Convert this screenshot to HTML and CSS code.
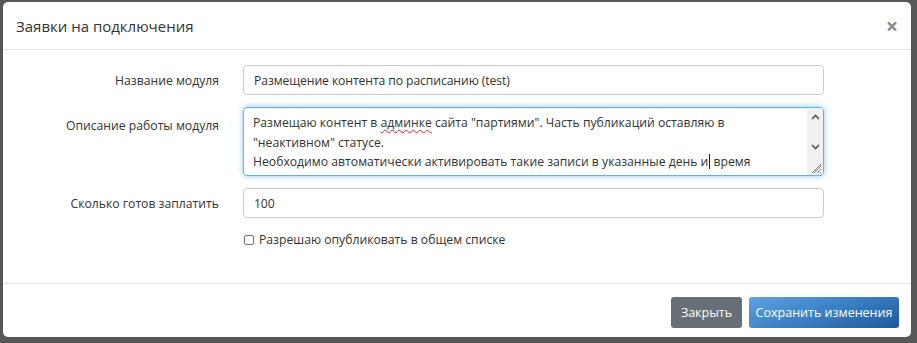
FILE: index.html
```html
<!DOCTYPE html>
<html lang="ru">
<head>
<meta charset="utf-8">
<title>Заявки на подключения</title>
<link rel="stylesheet" href="styles.css">
</head>
<body>
<div class="modal">
  <div class="modal-header">
    <h4 class="modal-title">Заявки на подключения</h4>
    <span class="close">×</span>
  </div>
  <div class="modal-body">
    <div class="form-row">
      <label class="label">Название модуля</label>
      <div class="input">Размещение контента по расписанию (test)</div>
    </div>
    <div class="form-row">
      <label class="label label-top">Описание работы модуля</label>
      <div class="textarea">
        <div class="ta-text">Размещаю контент в <span class="spell">админке</span> сайта "партиями". Часть публикаций оставляю в<br>"неактивном" статусе.<br>Необходимо автоматически активировать такие записи в указанные день и<span class="caret"></span> время</div>
        <div class="scrollbar">
          <svg class="arrow" width="9" height="6" viewBox="0 0 9 6"><path d="M1 5 L4.5 1.5 L8 5" fill="none" stroke="#555" stroke-width="1.6"/></svg>
          <svg class="arrow" width="9" height="6" viewBox="0 0 9 6"><path d="M1 1 L4.5 4.5 L8 1" fill="none" stroke="#555" stroke-width="1.6"/></svg>
          <svg class="grip" width="10" height="10" viewBox="0 0 10 10"><path d="M9 2 L2 9 M9 5 L5 9 M9 8 L8 9 M9 0 L0 9" stroke="#888" stroke-width="1"/></svg>
        </div>
      </div>
    </div>
    <div class="form-row">
      <label class="label">Сколько готов заплатить</label>
      <div class="input">100</div>
    </div>
    <div class="form-row check-row">
      <span></span>
      <label class="check"><span class="box"></span>Разрешаю опубликовать в общем списке</label>
    </div>
  </div>
  <div class="modal-footer">
    <button class="btn btn-default">Закрыть</button>
    <button class="btn btn-primary">Сохранить изменения</button>
  </div>
</div>
</body>
</html>
```

FILE: styles.css
```css
html, body {
  margin: 0;
  padding: 0;
}
body {
  background: #575757;
  width: 917px;
  height: 343px;
  padding: 2px 6px 6px 3px;
  box-sizing: border-box;
  font-family: "Open Sans", "DejaVu Sans", sans-serif;
  font-size: 12.2px;
  color: #333;
}
.modal {
  background: #fff;
  border-radius: 5px;
  height: 335px;
  display: flex;
  flex-direction: column;
}
.modal-header {
  height: 47px;
  border-bottom: 1px solid #e5e5e5;
  display: flex;
  align-items: center;
  justify-content: space-between;
  padding: 0 13px 0 13px;
}
.modal-title {
  margin: 0;
  font-weight: normal;
  font-size: 15px;
  color: #333;
  padding-top: 1px;
}
.close {
  font-size: 21px;
  font-weight: bold;
  color: #8a8a8a;
  line-height: 1;
  padding-top: 1px;
}
.modal-body {
  flex: 1;
  padding: 15px 0 0 15px;
  display: flex;
  flex-direction: column;
  gap: 12px;
}
.form-row {
  display: grid;
  grid-template-columns: 201px 581px;
  column-gap: 24px;
  align-items: center;
}
.label {
  text-align: right;
}
.label-top {
  align-self: start;
  padding-top: 10px;
}
.input {
  height: 30px;
  box-sizing: border-box;
  border: 1px solid #ccc;
  border-radius: 4px;
  padding: 0 10px;
  display: flex;
  align-items: center;
  letter-spacing: -0.1px;
}
.textarea {
  height: 69px;
  box-sizing: border-box;
  border: 1px solid #66afe9;
  border-radius: 4px;
  box-shadow: inset 0 1px 1px rgba(0,0,0,.075), 0 0 6px rgba(102,175,233,.7);
  display: flex;
  overflow: hidden;
}
.ta-text {
  flex: 1;
  padding: 5px 10px 0 9px;
  line-height: 19.5px;
  white-space: nowrap;
}
.spell {
  text-decoration: underline wavy #d22;
  text-decoration-thickness: 1px;
  text-underline-offset: 2px;
}
.caret {
  display: inline-block;
  width: 1px;
  height: 15px;
  background: #222;
  vertical-align: -3px;
  margin-left: 1px;
}
.scrollbar {
  width: 16px;
  background: #f0f0f0;
  display: flex;
  flex-direction: column;
  align-items: center;
  padding-top: 6px;
  box-sizing: border-box;
}
.scrollbar .arrow + .arrow {
  margin-top: 24px;
}
.grip {
  margin-top: auto;
  margin-bottom: 1px;
  margin-left: 4px;
}
.check-row {
  margin-top: 1px;
}
.check {
  display: flex;
  align-items: center;
  gap: 5px;
}
.box {
  width: 8px;
  height: 8px;
  border: 1px solid #777;
  border-radius: 2px;
  background: #fff;
  margin-left: 1px;
}
.modal-footer {
  height: 54px;
  border-top: 1px solid #e5e5e5;
  display: flex;
  justify-content: flex-end;
  align-items: flex-start;
  gap: 7px;
  padding: 13px 12px 0 0;
  box-sizing: border-box;
}
.btn {
  font-family: "Open Sans", "DejaVu Sans", sans-serif;
  font-size: 12.5px;
  color: #fff;
  border: none;
  border-radius: 3px;
  height: 31px;
  padding: 0 6px;
  white-space: nowrap;
}
.btn-default {
  background: #686e75;
  width: 71px;
}
.btn-primary {
  width: 150px;
  background: linear-gradient(160deg, #5ea2e0 0%, #3d82c8 45%, #1d5a9c 100%);
}
```
